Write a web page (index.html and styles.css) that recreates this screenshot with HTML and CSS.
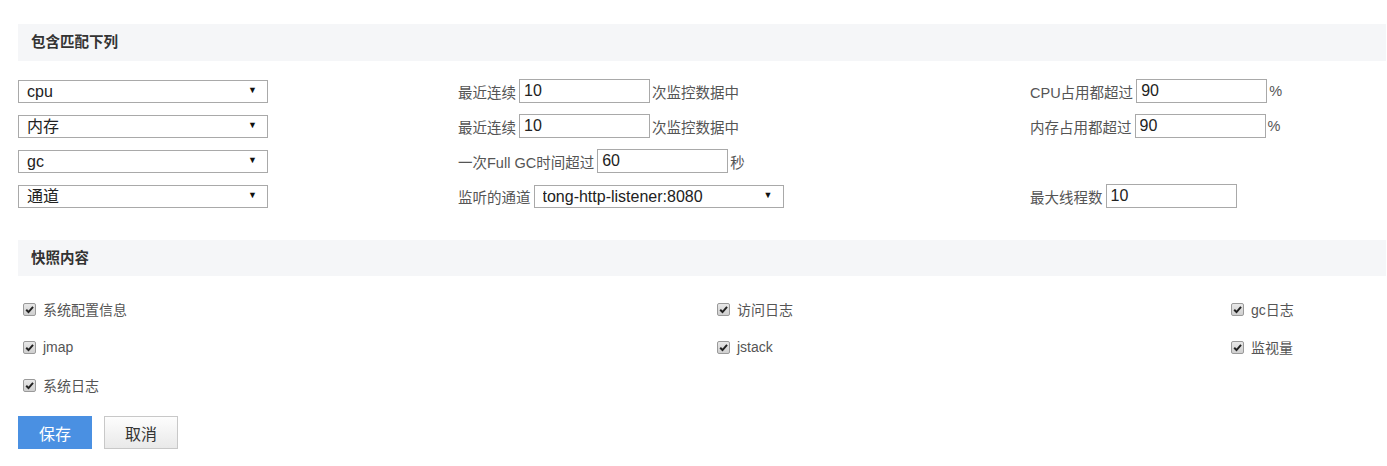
FILE: index.html
```html
<!DOCTYPE html>
<html lang="zh-CN">
<head>
  <meta charset="UTF-8">
  <title>告警快照配置</title>
  <link rel="stylesheet" href="styles.css">
</head>
<body>
  <div class="page">
    <h2 class="section-title">包含匹配下列</h2>

    <div class="rules">
      <div class="cell">
        <div class="select-box"><select class="pick"><option>cpu</option></select></div>
      </div>
      <div class="cell">
        <span class="label">最近连续</span><input class="field" type="text" value="10"><span class="unit">次监控数据中</span>
      </div>
      <div class="cell">
        <span class="label">CPU占用都超过</span><input class="field" type="text" value="90"><span class="unit">%</span>
      </div>

      <div class="cell">
        <div class="select-box"><select class="pick"><option>内存</option></select></div>
      </div>
      <div class="cell">
        <span class="label">最近连续</span><input class="field" type="text" value="10"><span class="unit">次监控数据中</span>
      </div>
      <div class="cell">
        <span class="label">内存占用都超过</span><input class="field" type="text" value="90"><span class="unit">%</span>
      </div>

      <div class="cell">
        <div class="select-box"><select class="pick"><option>gc</option></select></div>
      </div>
      <div class="cell">
        <span class="label">一次Full GC时间超过</span><input class="field" type="text" value="60"><span class="unit">秒</span>
      </div>
      <div class="cell"></div>

      <div class="cell">
        <div class="select-box"><select class="pick"><option>通道</option></select></div>
      </div>
      <div class="cell">
        <span class="label">监听的通道</span>
        <div class="select-box"><select class="pick"><option>tong-http-listener:8080</option></select></div>
      </div>
      <div class="cell">
        <span class="label">最大线程数</span><input class="field" type="text" value="10">
      </div>
    </div>

    <h2 class="section-title second">快照内容</h2>

    <div class="snapshots">
      <label class="check"><span class="box"><svg viewBox="0 0 10 10"><path d="M2 5.2 L4.1 7.3 L8.2 2.6" /></svg></span>系统配置信息</label>
      <label class="check"><span class="box"><svg viewBox="0 0 10 10"><path d="M2 5.2 L4.1 7.3 L8.2 2.6" /></svg></span>访问日志</label>
      <label class="check"><span class="box"><svg viewBox="0 0 10 10"><path d="M2 5.2 L4.1 7.3 L8.2 2.6" /></svg></span>gc日志</label>
      <label class="check"><span class="box"><svg viewBox="0 0 10 10"><path d="M2 5.2 L4.1 7.3 L8.2 2.6" /></svg></span>jmap</label>
      <label class="check"><span class="box"><svg viewBox="0 0 10 10"><path d="M2 5.2 L4.1 7.3 L8.2 2.6" /></svg></span>jstack</label>
      <label class="check"><span class="box"><svg viewBox="0 0 10 10"><path d="M2 5.2 L4.1 7.3 L8.2 2.6" /></svg></span>监视量</label>
      <label class="check"><span class="box"><svg viewBox="0 0 10 10"><path d="M2 5.2 L4.1 7.3 L8.2 2.6" /></svg></span>系统日志</label>
    </div>

    <div class="actions">
      <button class="btn btn-primary">保存</button>
      <button class="btn btn-default">取消</button>
    </div>
  </div>
</body>
</html>
```

FILE: styles.css
```css
body {
  margin: 0;
  font-family: "Liberation Sans", "Noto Sans CJK SC", sans-serif;
  color: #555;
  background: #fff;
}

.page {
  padding: 24px 1px 0 18px;
}

.section-title {
  margin: 0;
  height: 37px;
  line-height: 37px;
  padding-left: 13px;
  background-color: #f5f6f8;
  font-size: 14.5px;
  font-weight: bold;
  color: #333;
}

.section-title.second {
  height: 36px;
  line-height: 36px;
  margin-top: 32px;
}

.rules {
  display: grid;
  grid-template-columns: 440px 572px 1fr;
  grid-auto-rows: 24px;
  row-gap: 11px;
  margin-top: 18px;
}

.cell {
  display: flex;
  align-items: center;
  font-size: 14.5px;
}

.label {
  margin-right: 3px;
  white-space: nowrap;
}

.unit {
  margin-left: 2px;
}

.select-box {
  position: relative;
}

.select-box::after {
  content: "▼";
  position: absolute;
  right: 11px;
  top: 5px;
  font-size: 9px;
  color: #111;
  pointer-events: none;
}

.pick {
  appearance: none;
  -webkit-appearance: none;
  width: 250px;
  height: 23px;
  padding: 0 0 0 8px;
  border: 1px solid #a9a9a9;
  border-radius: 0;
  background: #fff;
  font-family: "Liberation Sans", "Noto Sans CJK SC", sans-serif;
  font-size: 16px;
  color: #222;
  display: block;
}

.field {
  box-sizing: border-box;
  width: 131px;
  height: 24px;
  padding: 0 4px;
  border: 1px solid #a9a9a9;
  font-family: "Liberation Sans", "Noto Sans CJK SC", sans-serif;
  font-size: 16px;
  color: #222;
}

.snapshots {
  display: grid;
  grid-template-columns: 694px 514px 1fr;
  grid-auto-rows: 20px;
  row-gap: 18px;
  margin-top: 23px;
}

.check {
  display: flex;
  align-items: center;
  padding-left: 5px;
  font-size: 14px;
  color: #555;
}

.box {
  box-sizing: border-box;
  width: 13px;
  height: 13px;
  margin-right: 7px;
  border: 1px solid #9a9a9a;
  border-radius: 2px;
  background: linear-gradient(#e8e8e8, #cfcfcf);
  display: flex;
}

.box svg {
  width: 11px;
  height: 11px;
}

.box path {
  fill: none;
  stroke: #222;
  stroke-width: 1.8;
}

.actions {
  display: flex;
  gap: 12px;
  margin-top: 21px;
}

.btn {
  width: 74px;
  height: 33px;
  font-family: "Liberation Sans", "Noto Sans CJK SC", sans-serif;
  font-size: 16px;
  border-radius: 0;
  cursor: pointer;
}

.btn-primary {
  background-color: #4a90e2;
  border: 1px solid #4a90e2;
  color: #fff;
}

.btn-default {
  background: linear-gradient(#fdfdfd, #e9e9e9);
  border: 1px solid #c8c8c8;
  color: #333;
}
```
